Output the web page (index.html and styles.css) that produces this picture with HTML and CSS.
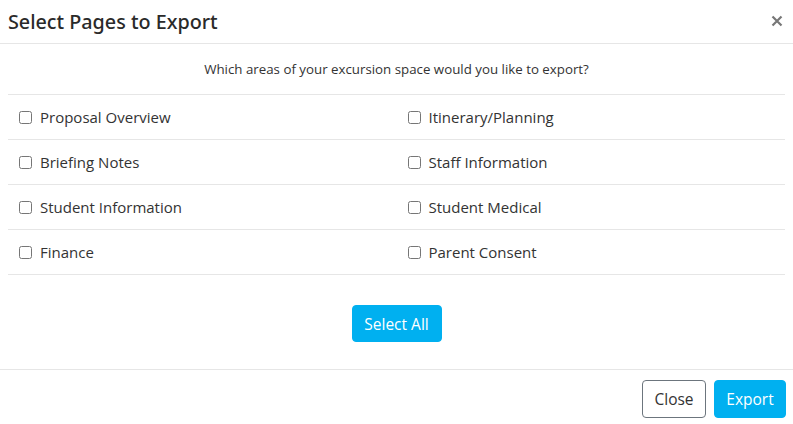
FILE: index.html
```html
<!DOCTYPE html>
<html>
<head>
<meta charset="utf-8">
<link rel="stylesheet" href="styles.css">
</head>
<body>
<div class="modal">
  <div class="modal-header">
    <h5 class="modal-title">Select Pages to Export</h5>
    <button class="close" aria-label="Close">
      <svg width="12" height="12" viewBox="0 0 12 12"><path d="M1.5 1.5L10.5 10.5M10.5 1.5L1.5 10.5" stroke="#777" stroke-width="2.2" stroke-linecap="butt"/></svg>
    </button>
  </div>
  <div class="modal-body">
    <p class="lead-text">Which areas of your excursion space would you like to export?</p>
    <div class="grid">
      <label class="cell"><input type="checkbox"><span>Proposal Overview</span></label>
      <label class="cell"><input type="checkbox"><span>Itinerary/Planning</span></label>
      <label class="cell"><input type="checkbox"><span>Briefing Notes</span></label>
      <label class="cell"><input type="checkbox"><span>Staff Information</span></label>
      <label class="cell"><input type="checkbox"><span>Student Information</span></label>
      <label class="cell"><input type="checkbox"><span>Student Medical</span></label>
      <label class="cell"><input type="checkbox"><span>Finance</span></label>
      <label class="cell"><input type="checkbox"><span>Parent Consent</span></label>
    </div>
    <div class="select-row">
      <button class="btn btn-primary btn-select">Select All</button>
    </div>
  </div>
  <div class="modal-footer">
    <button class="btn btn-outline">Close</button>
    <button class="btn btn-primary">Export</button>
  </div>
</div>
</body>
</html>
```
FILE: styles.css
```css
* { box-sizing: border-box; }
html, body { margin: 0; padding: 0; background: #fff; }
body {
  font-family: "Open Sans", "Noto Sans", sans-serif;
  color: #212529;
  width: 793px;
  height: 424px;
  overflow: hidden;
}
.modal { display: flex; flex-direction: column; }
.modal-header {
  height: 44px;
  display: flex;
  align-items: center;
  justify-content: space-between;
  padding: 0 10px 0 8px;
  border-bottom: 1px solid #e6e6e6;
}
.modal-title {
  margin: 0;
  font-family: "Noto Sans", "Open Sans", sans-serif;
  font-size: 19.75px;
  font-weight: 500;
  color: #2a2a2a;
  line-height: 1;
}
.close {
  background: none;
  border: 0;
  padding: 0;
  width: 12px;
  height: 12px;
  display: flex;
  margin-top: -2px;
}
.modal-body { padding: 0 8px; }
.lead-text {
  margin: 0;
  height: 51px;
  display: flex;
  align-items: center;
  justify-content: center;
  font-size: 13.3px;
  color: #333;
  border-bottom: 1px solid #e6e6e6;
}
.grid {
  display: grid;
  grid-template-columns: 1fr 1fr;
}
.cell {
  height: 45px;
  display: flex;
  align-items: center;
  padding-left: 11px;
  border-bottom: 1px solid #e6e6e6;
  font-size: 15px;
  color: #333;
}
.cell input {
  margin: 0 8px 0 0;
  width: 13px;
  height: 13px;
}
.select-row {
  display: flex;
  justify-content: center;
  padding: 30px 0 27px;
}
.btn {
  font-family: "Open Sans", "Noto Sans", sans-serif;
  font-size: 15.5px;
  border-radius: 4px;
  height: 38px;
  padding: 0 12px;
  cursor: pointer;
}
.btn-primary {
  background: #00b0f0;
  border: 1px solid #00b0f0;
  color: #fff;
}
.btn-select { height: 37px; width: 90px; padding: 0; }
.modal-footer {
  border-top: 1px solid #e6e6e6;
  display: flex;
  justify-content: flex-end;
  gap: 8px;
  padding: 10px 7px 0 0;
}
.modal-footer .btn-primary { width: 72px; padding: 0; }
.btn-outline {
  background: #fff;
  border: 1px solid #6c757d;
  color: #333;
  width: 64px;
  padding: 0;
}
```
